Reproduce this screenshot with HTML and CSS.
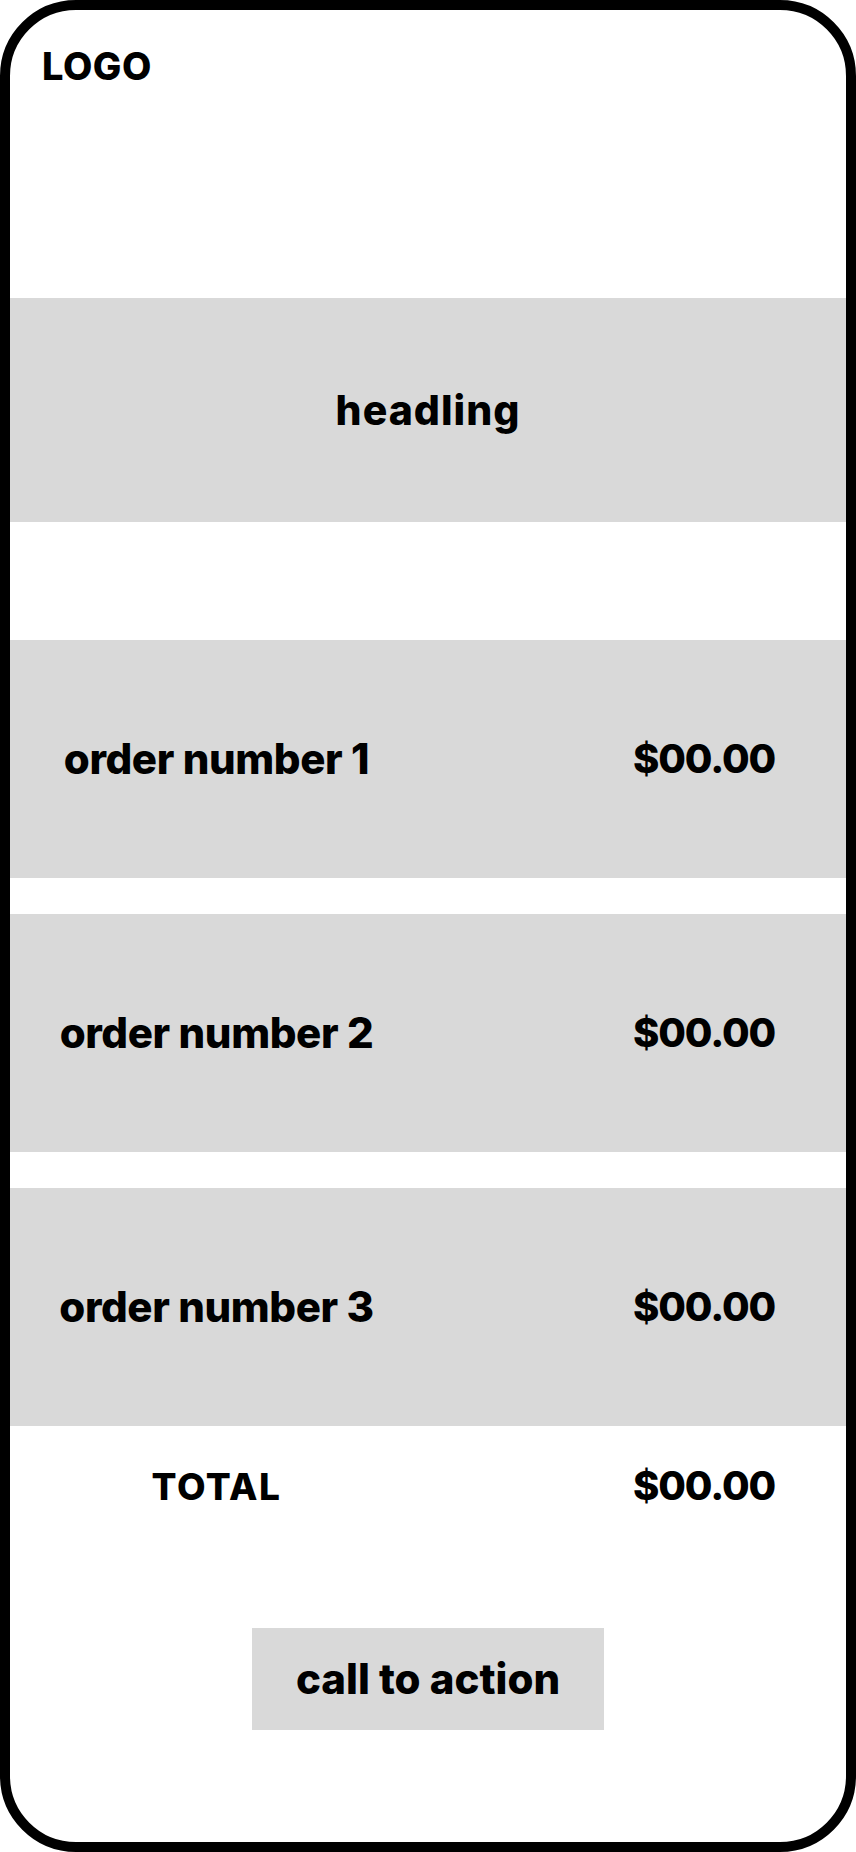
FILE: index.html
```html
<!DOCTYPE html>
<html lang="en">
<head>
<meta charset="utf-8">
<title>Order summary</title>
<link rel="stylesheet" href="styles.css">
</head>
<body>
<div class="phone">
  <header class="top">
    <div class="logo">LOGO</div>
  </header>
  <section class="hero">
    <h1 class="heading">headling</h1>
  </section>
  <section class="orders">
    <div class="row band">
      <span class="label">order number 1</span>
      <span class="price">$00.00</span>
    </div>
    <div class="row band">
      <span class="label">order number 2</span>
      <span class="price">$00.00</span>
    </div>
    <div class="row band">
      <span class="label">order number 3</span>
      <span class="price">$00.00</span>
    </div>
  </section>
  <div class="row total">
    <span class="label">TOTAL</span>
    <span class="price">$00.00</span>
  </div>
  <div class="cta-wrap">
    <button class="cta">call to action</button>
  </div>
</div>
</body>
</html>
```
FILE: styles.css
```css
html, body {
  margin: 0;
  padding: 0;
  background: #ffffff;
}

body {
  font-family: Inter, "Liberation Sans", sans-serif;
  font-weight: 800;
  color: #000;
}

.phone {
  width: 856px;
  height: 1852px;
  box-sizing: border-box;
  border: 10px solid #000;
  border-radius: 76px;
  overflow: hidden;
  background: #fff;
  display: flex;
  flex-direction: column;
}

.top {
  height: 288px;
  box-sizing: border-box;
  padding: 37px 0 0 32px;
}

.logo {
  font-size: 38px;
  line-height: 1;
  letter-spacing: 0.5px;
}

.hero {
  height: 224px;
  background: #d9d9d9;
  display: flex;
  align-items: center;
  justify-content: center;
}

.heading {
  margin: 0;
  font-size: 41px;
  line-height: 1;
  font-weight: 800;
  letter-spacing: 1px;
}

.orders {
  margin-top: 118px;
  display: flex;
  flex-direction: column;
  gap: 36px;
}

.row {
  display: flex;
  align-items: center;
}

.band {
  height: 238px;
  background: #d9d9d9;
}

.label {
  width: 413px;
  text-align: center;
  line-height: 1;
}

.price {
  margin-left: auto;
  width: 284px;
  text-align: center;
  line-height: 1;
  font-size: 40px;
  letter-spacing: -1.1px;
}

.band .label {
  font-size: 42px;
  letter-spacing: -0.4px;
}

.total {
  height: 120px;
}

.total .label {
  font-size: 37px;
  letter-spacing: 1.5px;
}

.cta-wrap {
  margin-top: 82px;
  display: flex;
  justify-content: center;
}

.cta {
  width: 352px;
  height: 102px;
  border: none;
  background: #d9d9d9;
  font-family: Inter, "Liberation Sans", sans-serif;
  font-weight: 800;
  font-size: 42px;
  line-height: 1;
  color: #000;
  letter-spacing: 0;
  padding: 0;
}
```
